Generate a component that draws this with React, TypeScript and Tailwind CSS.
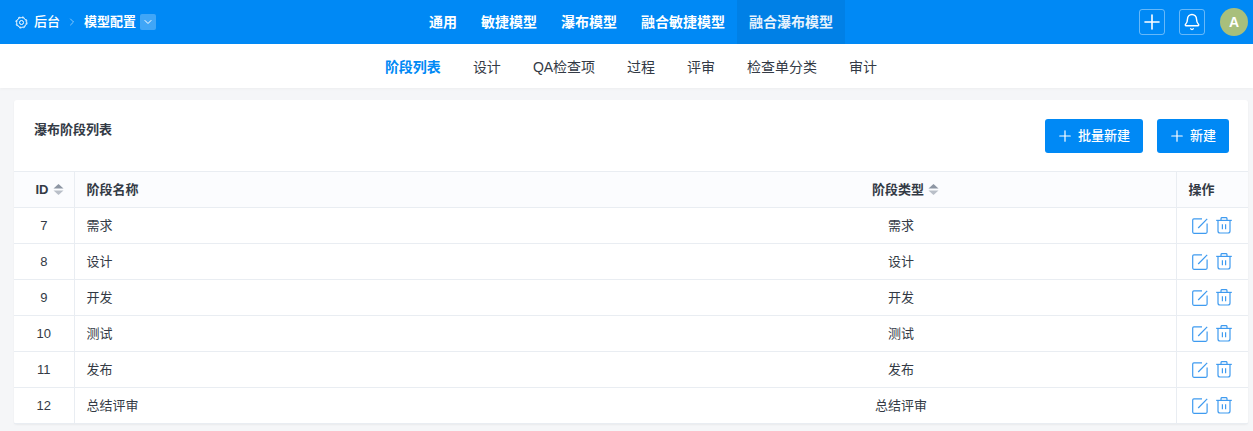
import React from 'react';
import { ChevronRight, ChevronDown, Plus, Bell } from 'lucide-react';

const font = "font-['Liberation_Sans','Noto_Sans_CJK_SC',sans-serif]";

const topTabs = ['通用', '敏捷模型', '瀑布模型', '融合敏捷模型', '融合瀑布模型'];
const subTabs = ['阶段列表', '设计', 'QA检查项', '过程', '评审', '检查单分类', '审计'];
const rows = [
  { id: 7, name: '需求' },
  { id: 8, name: '设计' },
  { id: 9, name: '开发' },
  { id: 10, name: '测试' },
  { id: 11, name: '发布' },
  { id: 12, name: '总结评审' },
];

function GearIcon() {
  return (
    <svg width="13" height="13" viewBox="0 0 13 13" fill="none" stroke="currentColor">
      <circle cx="6.5" cy="6.5" r="4.9" strokeWidth="1" />
      <circle cx="6.5" cy="6.5" r="5.6" strokeWidth="0.9" strokeDasharray="2.2 2.2" />
      <circle cx="6.5" cy="6.5" r="2" strokeWidth="1" />
    </svg>
  );
}

function SortIcon() {
  return (
    <svg width="11" height="13" viewBox="0 0 11 13" className="ml-1 shrink-0">
      <path d="M5.5 1 L10.5 5.6 H0.5 Z" fill="#8d96a3" />
      <path d="M5.5 12 L10.5 7.4 H0.5 Z" fill="#b9bfc8" />
    </svg>
  );
}

function EditIcon() {
  return (
    <svg width="16" height="16" viewBox="0 0 16 16" fill="none" stroke="#3f9bf0" strokeWidth="1.2">
      <path d="M10 0.9 H1.9 A1.2 1.2 0 0 0 0.7 2.1 V14.1 A1.2 1.2 0 0 0 1.9 15.3 H13.9 A1.2 1.2 0 0 0 15.1 14.1 V5.5" />
      <path d="M6.2 10 L15.2 0.8" />
    </svg>
  );
}

function TrashIcon() {
  return (
    <svg width="16" height="17" viewBox="0 0 16 17" fill="none" stroke="#3f9bf0" strokeWidth="1.2">
      <path d="M0.2 3.4 H15.8" />
      <path d="M5 3.2 V1.6 A1 1 0 0 1 6 0.7 H10 A1 1 0 0 1 11 1.6 V3.2" />
      <path d="M2 3.4 V14 A2 2 0 0 0 4 16 H12 A2 2 0 0 0 14 14 V3.4" />
      <path d="M6.4 7.2 V12.2 M9.6 7.2 V12.2" />
    </svg>
  );
}

export default function App() {
  return (
    <div className={`${font} h-[431px] w-[1253px] overflow-hidden bg-[#f5f6f8] text-[13px] text-[#333a45]`}>
      <header className="relative flex h-11 items-center justify-center bg-[#0089f5] text-white">
        <div className="absolute left-[15px] top-0 flex h-11 items-center font-medium">
          <GearIcon />
          <span className="ml-[6px]">后台</span>
          <ChevronRight className="ml-[6px] h-3 w-3 text-white/70" strokeWidth={1.5} />
          <span className="ml-[6px] font-semibold">模型配置</span>
          <span className="ml-1 flex h-4 w-4 items-center justify-center rounded-[2px] bg-white/25">
            <ChevronDown className="h-3 w-3" strokeWidth={2} />
          </span>
        </div>
        <nav className="ml-[9px] flex text-[14px]">
          {topTabs.map((tab) => (
            <div
              key={tab}
              className={`flex h-11 items-center px-3 font-semibold ${
                tab === '融合瀑布模型' ? 'bg-[#0080e6] text-white/90' : ''
              }`}
            >
              {tab}
            </div>
          ))}
        </nav>
        <div className="absolute right-[5px] top-0 flex h-11 items-center">
          <button className="flex h-[26px] w-[26px] items-center justify-center rounded-[3px] border border-white/40">
            <Plus className="h-6 w-6 shrink-0" strokeWidth={1.6} />
          </button>
          <button className="ml-[14px] flex h-[26px] w-[26px] items-center justify-center rounded-[3px] border border-white/40">
            <Bell className="h-[18px] w-[18px]" strokeWidth={1.9} />
          </button>
          <div className="ml-[15px] flex h-7 w-7 items-center justify-center rounded-full bg-[#a8bf7c] text-[14px] font-bold">
            A
          </div>
        </div>
      </header>

      <nav className="flex h-11 items-center justify-center gap-8 bg-white pl-[9px] pt-[2px] text-[14px] shadow-[0_1px_3px_rgba(0,0,0,0.04)]">
        {subTabs.map((tab, i) => (
          <span key={tab} className={i === 0 ? 'font-semibold text-[#0089f5]' : ''}>
            {tab}
          </span>
        ))}
      </nav>

      <section className="ml-[14px] mt-3 h-[324px] w-[1234px] rounded-[3px] bg-white shadow-[0_1px_2px_rgba(0,0,0,0.05)]">
        <div className="flex h-[71px] items-start justify-between pl-5 pr-[19px]">
          <h2 className="mt-[22px] font-semibold leading-4">瀑布阶段列表</h2>
          <div className="mt-[19px] flex gap-[14px]">
            <button className="flex h-[34px] w-[98px] items-center justify-center rounded-[3px] bg-[#0089f5] font-medium text-white">
              <Plus className="-ml-[2px] mr-1 h-[18px] w-[18px]" strokeWidth={1.6} />
              批量新建
            </button>
            <button className="flex h-[34px] w-[72px] items-center justify-center rounded-[3px] bg-[#0089f5] font-medium text-white">
              <Plus className="-ml-[2px] mr-1 h-[18px] w-[18px]" strokeWidth={1.6} />
              新建
            </button>
          </div>
        </div>
        <table className="w-full table-fixed border-collapse">
          <colgroup>
            <col className="w-[60px]" />
            <col className="w-[786px]" />
            <col className="w-[316px]" />
            <col className="w-[72px]" />
          </colgroup>
          <thead>
            <tr className="h-9 border-y border-[#e9edf2] bg-[#fbfcfe]">
              <th className="border-r border-[#e9edf2] p-0 font-semibold">
                <div className="flex items-center justify-end pr-[10px]">
                  ID
                  <SortIcon />
                </div>
              </th>
              <th className="px-3 text-left font-semibold">阶段名称</th>
              <th className="border-r border-[#e9edf2] px-3 text-left font-semibold">
                <div className="flex items-center">
                  阶段类型
                  <SortIcon />
                </div>
              </th>
              <th className="px-3 text-left font-semibold">操作</th>
            </tr>
          </thead>
          <tbody>
            {rows.map((row) => (
              <tr key={row.id} className="h-9 border-b border-[#e9edf2]">
                <td className="border-r border-[#e9edf2] p-0 pt-px text-center">{row.id}</td>
                <td className="px-3 pt-px">{row.name}</td>
                <td className="border-r border-[#e9edf2] pl-[13px] pt-px">
                  <div className="w-14 text-center">{row.name}</div>
                </td>
                <td className="pl-[15px]">
                  <div className="flex items-center gap-2">
                    <EditIcon />
                    <TrashIcon />
                  </div>
                </td>
              </tr>
            ))}
          </tbody>
        </table>
      </section>
    </div>
  );
}
